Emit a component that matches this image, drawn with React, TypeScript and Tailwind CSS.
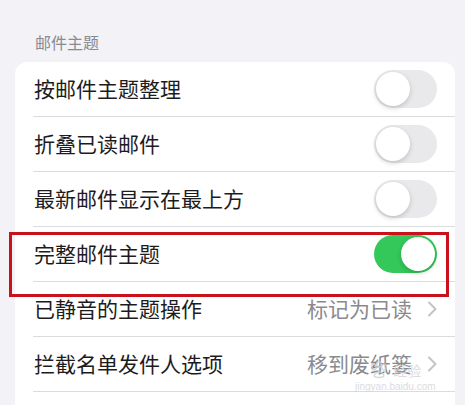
const font = { fontFamily: '"Noto Sans CJK SC", "Noto Sans", sans-serif' };

const rows = [
  { label: "按邮件主题整理", toggle: false },
  { label: "折叠已读邮件", toggle: false },
  { label: "最新邮件显示在最上方", toggle: false },
  { label: "完整邮件主题", toggle: true, highlight: true },
  { label: "已静音的主题操作", value: "标记为已读" },
  { label: "拦截名单发件人选项", value: "移到废纸篓", watermark: true },
  { label: "", value: "" },
];

const Toggle = ({ on }: { on: boolean }) => (
  <div
    className={`relative h-[38px] w-[63px] rounded-full ${
      on ? "bg-[#34c759]" : "bg-[#e9e9eb]"
    }`}
  >
    <div
      className={`absolute top-[2px] h-[34px] w-[34px] rounded-full bg-white shadow-[0_2px_5px_rgba(0,0,0,0.18)] ${
        on ? "left-[27px]" : "left-[2px]"
      }`}
    />
  </div>
);

const Chevron = () => (
  <svg width="10" height="16" viewBox="0 0 10 16" fill="none">
    <path
      d="M2 1.5 L8.5 8 L2 14.5"
      stroke="#c4c4c8"
      strokeWidth="2"
      strokeLinecap="round"
      strokeLinejoin="round"
    />
  </svg>
);

// faint paw mark of the watermark
const Paw = () => (
  <svg width="22" height="18" viewBox="0 0 22 18" fill="none" stroke="#cfcfd4" strokeWidth="1.4">
    <ellipse cx="5" cy="6" rx="2.2" ry="3" />
    <ellipse cx="10" cy="3.5" rx="2.2" ry="3" />
    <ellipse cx="15" cy="6" rx="2.2" ry="3" />
    <path d="M5 15 C6 10 14 10 15 15 C13 17 7 17 5 15 Z" />
  </svg>
);

export default function App() {
  return (
    <div
      className="h-[405px] w-[465px] overflow-hidden bg-[#f2f2f7]"
      style={font}
    >
      <div className="pl-[35px] pt-[31px] pb-[9px] text-[16px] leading-[22px] text-[#8a8a8f]">
        邮件主题
      </div>
      <div className="mx-[15px] w-[440px] rounded-[12px] bg-white">
        {rows.map((row, i) => (
          <div key={i} className="relative pl-[18px]">
            <div className="flex h-[55px] items-center justify-between border-b border-[#dcdcdf] pr-[18px]">
              <span className="pl-[1px] text-[21px] text-[#1c1c1e]">
                {row.label}
              </span>
              {row.toggle !== undefined ? (
                <Toggle on={row.toggle} />
              ) : row.value ? (
                <div className="flex items-center gap-[15px]">
                  <span className="text-[21px] text-[#8a8a8e]">{row.value}</span>
                  <Chevron />
                </div>
              ) : null}
            </div>
            {row.highlight && (
              <div className="pointer-events-none absolute top-[5px] bottom-[-15px] left-[-6px] right-[6px] z-10 border-[3px] border-[#c9111b]" />
            )}
            {row.watermark && (
              <div className="pointer-events-none absolute top-[24px] left-[340px] z-10 flex flex-col items-center text-[#d4d4d9] opacity-80">
                <div className="flex items-center gap-[2px]">
                  <Paw />
                  <span className="text-[14px] leading-[17px]">经验</span>
                </div>
                <span
                  className="mt-[2px] text-[10px] leading-[12px]"
                  style={{ fontFamily: '"Liberation Sans", sans-serif' }}
                >
                  jingyan.baidu.com
                </span>
              </div>
            )}
          </div>
        ))}
      </div>
    </div>
  );
}
